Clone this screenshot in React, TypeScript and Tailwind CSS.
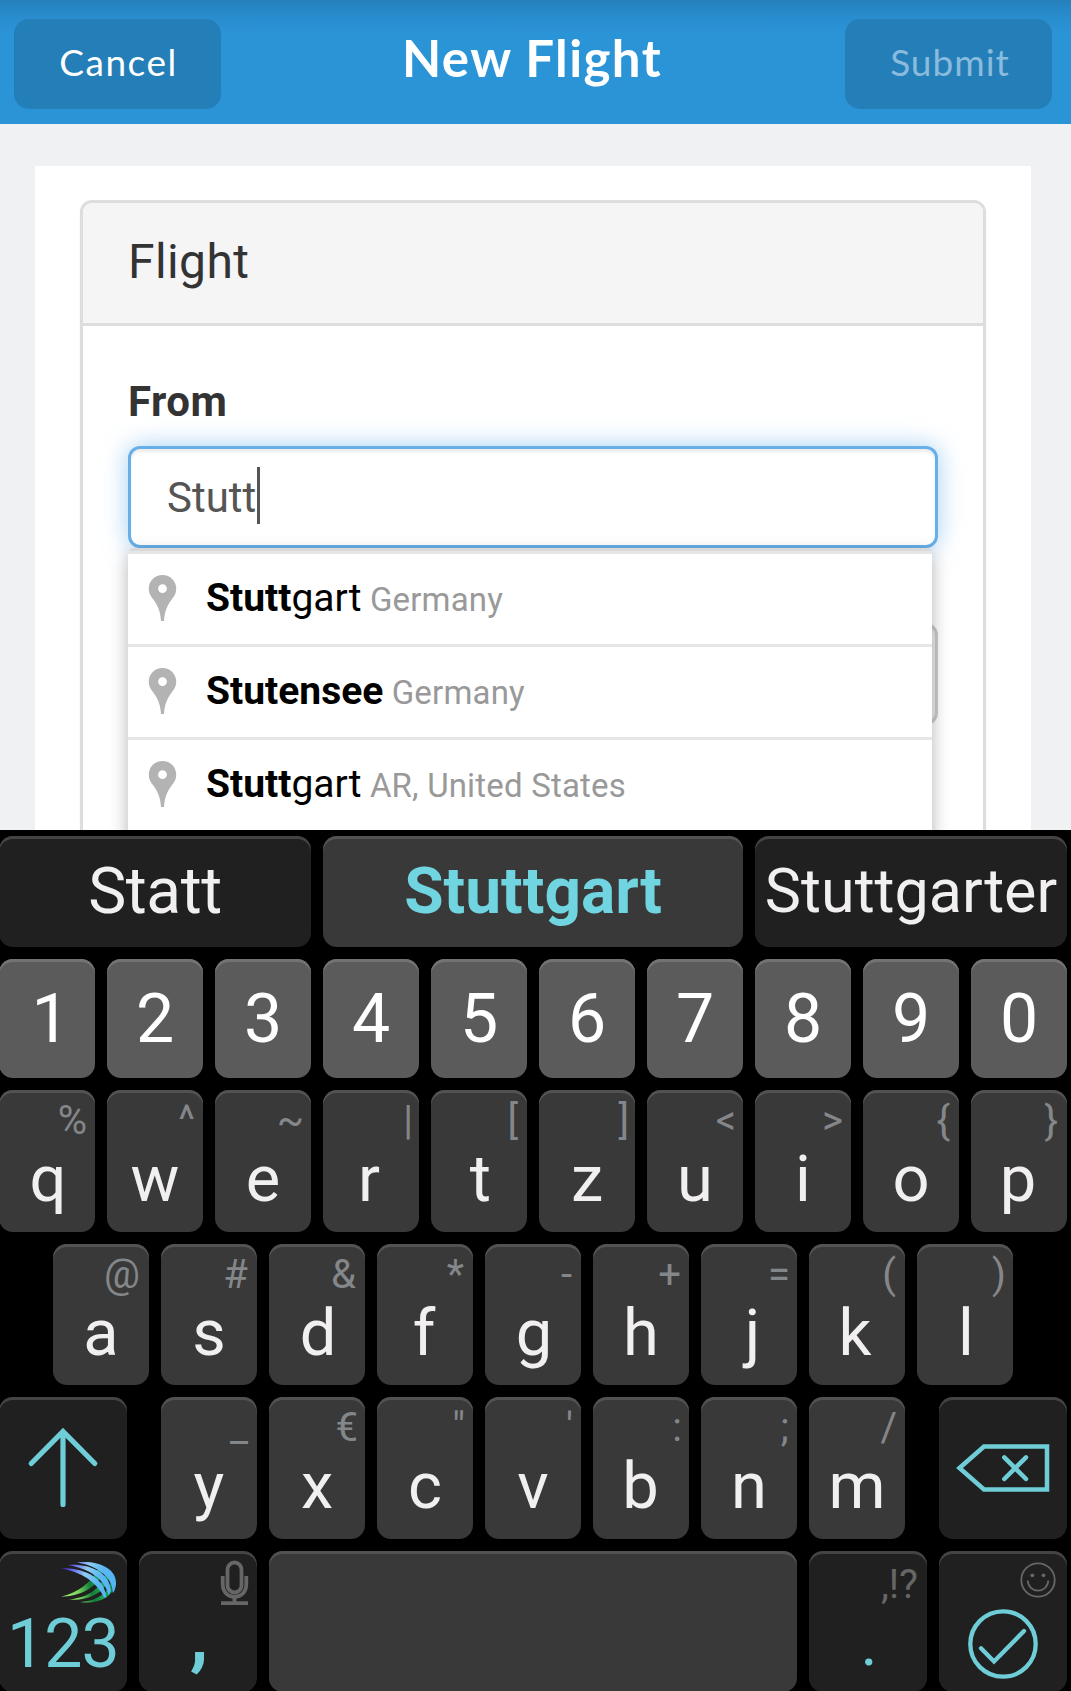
import React from "react";

const CYAN = "#6fcdd7";

const suggestions = [
  { match: "Stutt", rest: "gart", place: "Germany" },
  { match: "Stutensee", rest: "", place: "Germany" },
  { match: "Stutt", rest: "gart", place: "AR, United States" },
];

type KeyDef = { label: string; hint: string; pad?: string; nudge?: string };

const rowOne: KeyDef[] = [
  { label: "q", hint: "%", nudge: "pl-[2px]" },
  { label: "w", hint: "^" },
  { label: "e", hint: "~", pad: "pr-[7px]" },
  { label: "r", hint: "|", pad: "pr-[6px]", nudge: "pr-[4px]" },
  { label: "t", hint: "[", pad: "pr-[9px]", nudge: "pl-[3px]" },
  { label: "z", hint: "]", pad: "pr-[6px]" },
  { label: "u", hint: "<", pad: "pr-[7px]" },
  { label: "i", hint: ">" },
  { label: "o", hint: "{", pad: "pr-[9px]" },
  { label: "p", hint: "}", pad: "pr-[9px]", nudge: "pr-[2px]" },
];
const rowTwo: KeyDef[] = [
  { label: "a", hint: "@", pad: "pr-[9px]" },
  { label: "s", hint: "#", pad: "pr-[9px]" },
  { label: "d", hint: "&", pad: "pr-[9px]", nudge: "pl-[2px]" },
  { label: "f", hint: "*", pad: "pr-[9px]", nudge: "pr-[2px]" },
  { label: "g", hint: "-", pad: "pr-[9px]", nudge: "pl-[2px]" },
  { label: "h", hint: "+" },
  { label: "j", hint: "=", pad: "pr-[7px]", nudge: "pl-[7px]" },
  { label: "k", hint: "(", pad: "pr-[9px]", nudge: "pr-[4px]" },
  { label: "l", hint: ")", pad: "pr-[7px]", nudge: "pl-[2px]" },
];
const rowThree: KeyDef[] = [
  { label: "y", hint: "_", pad: "pr-[9px]" },
  { label: "x", hint: "€", pad: "pr-[7px]" },
  { label: "c", hint: '"' },
  { label: "v", hint: "'" },
  { label: "b", hint: ":", pad: "pr-[7px]", nudge: "pr-[1px]" },
  { label: "n", hint: ";" },
  { label: "m", hint: "/" },
];

function LetterKey({ label, hint, pad = "pr-[8px]", nudge = "" }: KeyDef) {
  return (
    <div className="relative flex h-full w-[96px] shrink-0 justify-center rounded-[14px] bg-[#393939] pt-[51px] shadow-[inset_0_3px_0_#525252]">
      <span className={`absolute right-0 top-[7px] text-[40px] leading-[48px] text-[#84878a] ${pad}`}>{hint}</span>
      <span className={`text-[65px] leading-[76px] text-[#f1eff0] ${nudge}`}>{label}</span>
    </div>
  );
}

function DarkKey({ className, children }: { className: string; children?: React.ReactNode }) {
  return (
    <div className={`relative h-full shrink-0 rounded-[14px] bg-[#202020] shadow-[inset_0_3px_0_#444444] ${className}`}>
      {children}
    </div>
  );
}

function Pin() {
  return (
    <svg className="ml-[20px] mt-[20px] h-[48px] w-[29px] shrink-0" viewBox="0 0 29 48">
      <path
        fill="#b3b3b3"
        fillRule="evenodd"
        d="M14.500 1C6.800 1 0.800 6.900 0.800 14.500C0.800 20 3.200 22.500 6 26.500C10 32 12.500 38 13 47H16C16.500 38 19 32 23 26.500C25.800 22.500 28.200 20 28.200 14.500C28.200 6.900 22.200 1 14.500 1ZM14.500 10.200A4.400 4.400 0 1 1 14.500 19A4.400 4.400 0 1 1 14.500 10.200Z"
      />
    </svg>
  );
}

function SwiftLogo() {
  return (
    <svg className="absolute left-[60px] top-[8px] h-[46px] w-[60px]" viewBox="0 0 60 46">
      <defs>
        <linearGradient id="blue" gradientUnits="userSpaceOnUse" x1="1" y1="8" x2="54" y2="30">
          <stop offset="0" stopColor="#4510b8" />
          <stop offset="0.220" stopColor="#6668ee" />
          <stop offset="0.450" stopColor="#8fccf5" />
          <stop offset="0.700" stopColor="#5cb8f5" />
          <stop offset="1" stopColor="#52b4f2" />
        </linearGradient>
        <linearGradient id="green" gradientUnits="userSpaceOnUse" x1="1" y1="40" x2="54" y2="28">
          <stop offset="0" stopColor="#a4ee78" />
          <stop offset="0.350" stopColor="#7dd860" />
          <stop offset="0.600" stopColor="#0f7d38" />
          <stop offset="0.800" stopColor="#23a352" />
          <stop offset="1" stopColor="#0d7f45" />
        </linearGradient>
      </defs>
      <g fill="url(#green)">
        <path d="M2 37.700C18 33.500 32 25 40 8L44 12C39 29 20 37.500 2 37.700Z" />
        <path d="M10 40.700C27 38.500 43 31 47 12L50.500 17C47 34 29 42 10 40.700Z" />
        <path d="M21 43C38 42 51 34 53 18L57 24C54 39 38 45.500 21 43Z" />
      </g>
      <g fill="url(#blue)">
        <path d="M2 9.300C22 9 45 16 47.500 38.500H45C40 27 27 14 2 9.300Z" />
        <path d="M9 6C30 4.500 51 13 52 32L49.500 36.500C46 20 30 9.500 9 6Z" />
        <path d="M18 3.500C38 1 58 9 57 25C56.500 30 55 33 53.800 34C54 18 38 6.500 18 3.500Z" />
      </g>
    </svg>
  );
}

export default function App() {
  return (
    <div className="flex h-[1691px] w-[1071px] flex-col overflow-hidden bg-[#eff1f3] font-['Roboto',sans-serif]">
      <header className="flex h-[124px] shrink-0 justify-between bg-[linear-gradient(to_bottom,#2580ba_0px,#2787c6_8px,#298ed0_20px,#2b94d7_34px)] pl-[14px] pr-[19px] pt-[19px] font-['Lato',sans-serif]">
        <button className="h-[90px] w-[207px] rounded-[15px] bg-[#247eb8] pb-[4px] pl-[2px] text-[37px] tracking-[1.500px] text-white">Cancel</button>
        <h1 className="mt-[7px] pr-[2px] text-[51px] font-bold leading-[64px] tracking-[1.400px] text-white">New Flight</h1>
        <button className="h-[90px] w-[207px] rounded-[15px] bg-[#247eb8] pb-[4px] pl-[3px] text-[37px] tracking-[1px] text-[#8abbdd]">Submit</button>
      </header>

      <main className="ml-[35px] mt-[42px] h-[664px] w-[996px] shrink-0 overflow-hidden bg-white px-[45px] pt-[34px]">
        <section className="h-[800px] w-[906px] rounded-[12px] border-[3px] border-[#dddddd] bg-white shadow-[0_3px_3px_rgba(0,0,0,0.05)]">
          <div className="h-[123px] rounded-t-[9px] border-b-[3px] border-[#dddddd] bg-[#f5f5f5] pl-[45px] pt-[30px] text-[48px] leading-[58px] tracking-[0.400px] text-[#333333]">
            Flight
          </div>
          <div className="px-[45px] pt-[45px]">
            <label className="block h-[75px] pt-[6px] text-[42px] font-bold leading-[50px] tracking-[0.500px] text-[#333333]">From</label>
            <div className="relative">
              <div className="flex h-[102px] w-[810px] items-center rounded-[12px] border-[3px] border-[#66afe9] bg-white pl-[36px] text-[42px] text-[#555555] shadow-[inset_0_3px_3px_rgba(0,0,0,0.075),0_0_24px_rgba(102,175,233,0.600)]">
                <span>Stutt</span>
                <span className="mb-[4px] ml-px h-[57px] w-[3px] bg-[#555555]" />
              </div>
              <div className="mt-[75px] h-[102px] w-[810px] rounded-[12px] border-[3px] border-[#cccccc] bg-[#eeeeee]" />
              <div className="absolute left-0 top-[102px] h-[320px] w-[804px] rounded-t-[6px] border-t-[3px] border-[#d9d9d9] bg-white shadow-[0_6px_18px_rgba(0,0,0,0.300)]">
                {suggestions.map((s) => (
                  <div key={s.match + s.place} className="flex h-[93px] border-t-[3px] border-[#e6e6e6]">
                    <Pin />
                    <div className="ml-[29px] whitespace-nowrap pt-[21px] text-[33px] leading-[46px] tracking-[0.180px] text-[#999999]">
                      <span className="text-[39px] tracking-normal text-black">
                        <b>{s.match}</b>
                        {s.rest}
                      </span>{" "}
                      {s.place}
                    </div>
                  </div>
                ))}
              </div>
            </div>
          </div>
        </section>
      </main>

      <div className="relative flex h-[861px] shrink-0 flex-col gap-[12px] bg-black pt-[6px]">
        <div className="-ml-px flex h-[111px] shrink-0 gap-[12px] text-[64px] leading-[112px] text-[#f1eff0]">
          <DarkKey className="w-[312px] text-center tracking-[-0.400px]">Statt</DarkKey>
          <div className="w-[420px] rounded-[14px] bg-[#393939] text-center font-bold text-[#70d5e0] shadow-[inset_0_3px_0_#525252]">Stuttgart</div>
          <DarkKey className="w-[312px] text-center text-[61px] leading-[110px]">Stuttgarter</DarkKey>
        </div>
        <div className="-ml-px flex h-[119px] shrink-0 gap-[12px]">
          {["1", "2", "3", "4", "5", "6", "7", "8", "9", "0"].map((n) => (
            <div
              key={n}
              className={`w-[96px] rounded-[14px] bg-[#5b5b5b] text-center text-[68px] leading-[120px] text-white shadow-[inset_0_3px_0_#737373] ${n === "1" ? "pl-[7px]" : ""}`}
            >
              {n}
            </div>
          ))}
        </div>
        <div className="-ml-px flex h-[142px] shrink-0 gap-[12px]">
          {rowOne.map((k) => (
            <LetterKey key={k.label} {...k} />
          ))}
        </div>
        <div className="ml-[53px] flex h-[141px] shrink-0 gap-[12px]">
          {rowTwo.map((k) => (
            <LetterKey key={k.label} {...k} />
          ))}
        </div>
        <div className="-ml-px flex h-[142px] w-[1068px] shrink-0 justify-between">
          <DarkKey className="w-[128px]">
            <svg className="h-[142px] w-[128px]" viewBox="0 0 128 142" fill="none" stroke={CYAN} strokeWidth="5.200" strokeLinecap="round">
              <path d="M64 34.500V107.500M32.200 66.500L64 34.500L95.800 66.500" />
            </svg>
          </DarkKey>
          <div className="flex gap-[12px]">
            {rowThree.map((k) => (
              <LetterKey key={k.label} {...k} />
            ))}
          </div>
          <DarkKey className="w-[128px]">
            <svg className="h-[142px] w-[128px]" viewBox="0 0 128 142" fill="none" stroke={CYAN} strokeWidth="4.500">
              <path d="M20.500 71L45 49.500H108V92.500H45Z" />
              <path d="M65.300 60.300L87 82M87 60.300L65.300 82" strokeLinecap="round" />
            </svg>
          </DarkKey>
        </div>
        <div className="-ml-px flex h-[141px] shrink-0 gap-[12px]">
          <DarkKey className="w-[128px] pl-[8px] pt-[53px] text-[68px] leading-[80px] tracking-[-1px] text-[#6fcdd7]">
            <SwiftLogo />
            <span>123</span>
          </DarkKey>
          <DarkKey className="w-[118px] pl-[2px] pt-[46px] text-center text-[76px] font-bold leading-[76px] text-[#6fcdd7]">
            <svg className="absolute right-[8px] top-[8px] h-[48px] w-[29px]" viewBox="0 0 29 48" fill="none" stroke="#666666" strokeWidth="3.800">
              <rect x="7.500" y="3.500" width="14" height="30" rx="7" />
              <path d="M2.700 17V25C2.700 33 8 38 14.500 38S26.300 33 26.300 25V17M14.500 38V44M1 44.200H28" />
            </svg>
            ,
          </DarkKey>
          <div className="w-[528px] rounded-[14px] bg-[#393939] shadow-[inset_0_3px_0_#525252]" />
          <DarkKey className="w-[118px] pl-[2px] pt-[54px] text-center text-[65px] leading-[76px] text-[#6fcdd7]">
            <span className="absolute right-[9px] top-[10px] text-[40px] leading-[48px] text-[#666666]">,!?</span>.
          </DarkKey>
          <DarkKey className="w-[128px]">
            <svg className="h-[141px] w-[128px]" viewBox="0 0 128 141" fill="none">
              <g stroke="#666666" strokeWidth="1.800">
                <circle cx="99" cy="29" r="16.700" />
                <path d="M88.700 29.500C89.500 43 108.500 43 109.300 29.500" />
              </g>
              <circle cx="93.300" cy="24.300" r="1.900" fill="#666666" />
              <circle cx="104.500" cy="24.300" r="1.900" fill="#666666" />
              <g stroke={CYAN} strokeWidth="4.300">
                <circle cx="64" cy="93" r="32.700" />
                <path d="M42 97.300L55 110.500L85 80" strokeLinecap="round" />
              </g>
            </svg>
          </DarkKey>
        </div>
      </div>
    </div>
  );
}
